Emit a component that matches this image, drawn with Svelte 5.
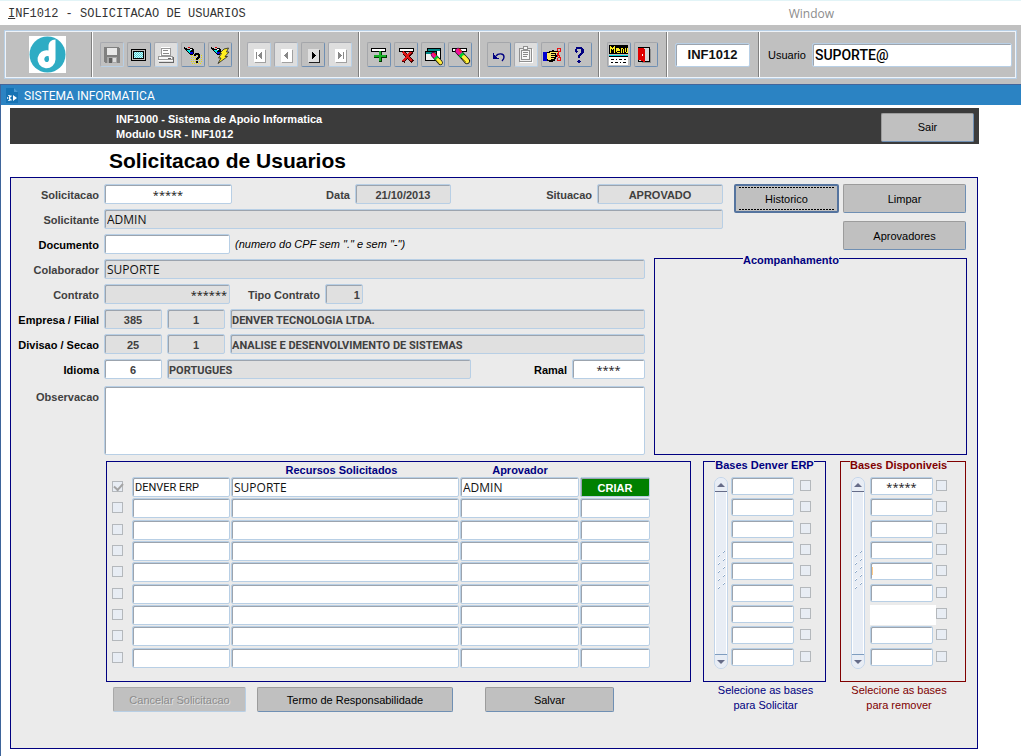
<script>
  const resources = Array.from({ length: 9 }, (_, i) =>
    i === 0
      ? { on: true, name: 'DENVER ERP', requested: 'SUPORTE', approver: 'ADMIN', action: 'CRIAR' }
      : { on: false, name: '', requested: '', approver: '', action: '' }
  );
  const erpBases = Array.from({ length: 9 }, () => '');
  const freeBases = Array.from({ length: 9 }, (_, i) => (i === 0 ? '*****' : ''));

  const toolGroups = [
    [
      { id: 'save', label: 'Gravar', off: true },
      { id: 'screen', label: 'Tela' },
      { id: 'print', label: 'Imprimir', off: true, pale: true },
      { id: 'query', label: 'Consultar' },
      { id: 'execute', label: 'Executar consulta' }
    ],
    [
      { id: 'first', label: 'Primeiro', off: true, pale: true },
      { id: 'prev', label: 'Anterior', off: true, pale: true },
      { id: 'next', label: 'Proximo' },
      { id: 'last', label: 'Ultimo', off: true, pale: true }
    ],
    [
      { id: 'add', label: 'Inserir' },
      { id: 'remove', label: 'Excluir' },
      { id: 'clearform', label: 'Limpar tela' },
      { id: 'clearrow', label: 'Limpar registro' }
    ],
    [
      { id: 'undo', label: 'Desfazer' },
      { id: 'list', label: 'Lista', off: true, pale: true },
      { id: 'point', label: 'Editar' },
      { id: 'help', label: 'Ajuda' }
    ],
    [
      { id: 'menu', label: 'Menu' },
      { id: 'exit', label: 'Sair do modulo' }
    ]
  ];
</script>

{#snippet torch()}
  <path fill="#000" d="M2 3h1v1h2v1h3v-1h3v1h1v5h-1v1h-3v-1h-1v-1h-1v-1h-1v-1h-1v-1h-1v-1h-1z" />
  <path fill="#00e5e5" d="M5 6h4v1h-1v2h-1v-1h-1v-1h-1z" />
  <path fill="#fff" d="M8 5h2v1h-2z" />
  <path fill="#0000e0" d="M8 8h3v2h-3z" />
  <path fill="#e00000" d="M6 3h2v1h-2z" />
{/snippet}

{#snippet brush()}
  <g fill="none" shape-rendering="auto">
    <path stroke="#000" stroke-width="6" stroke-linecap="round" d="M9 7l9 10" />
    <path stroke="#f010a0" stroke-width="5" stroke-linecap="round" d="M9 7l2 2" />
    <path stroke="#ff2020" stroke-width="2" d="M10 5l2 3" />
    <path stroke="#00d030" stroke-width="5" d="M11.500 10l2.500 2.500" />
    <path stroke="#ffee40" stroke-width="4.500" stroke-linecap="round" d="M15 13.500l3 3.500" />
    <path stroke="#a89800" stroke-width="1" d="M13 14l4 4" />
  </g>
{/snippet}

{#snippet glyph(id)}
  <svg viewBox="0 0 22 22" width="22" height="22" aria-hidden="true" shape-rendering="crispEdges">
    {#if id === 'save'}
      <path fill="#808080" d="M3 3h15v1h1v15h-15v-1h-1z" />
      <path fill="#e8e8e8" d="M6 4h10v7h-10z" />
      <path fill="#a8a8a8" d="M6 13h10v6h-10z" />
      <path fill="#606060" d="M8 14h3v5h-3z" />
      <path fill="#dcdcdc" d="M12 14h3v4h-3z" />
    {:else if id === 'screen'}
      <path fill="#c0c0c0" stroke="#000" d="M3.500 5.500h14v11h-14z" />
      <path fill="#c8ffff" stroke="#000" d="M5.500 7.500h10v7h-10z" />
      <path stroke="#58c8d0" stroke-dasharray="1 1" d="M6 8.500h9M6 10.500h9M6 12.500h9" />
      <path stroke="#58c8d0" stroke-dasharray="1 1" d="M7 9.500h8M7 11.500h8M7 13.500h8" />
    {:else if id === 'print'}
      <path fill="#fff" d="M6 3h9v9h-10v-2h1z" />
      <path fill="none" stroke="#999" d="M6.500 4.500h9v7h-9z" />
      <path fill="#888" d="M8 6h5v1h-5zM8 9h6v1h-6z" />
      <path fill="#fafafa" d="M3 12h15v5h-15z" />
      <path fill="none" stroke="#999" d="M3.500 12.500h14v3h-14z" />
      <path fill="#666" d="M13 14h3v1h-3zM4 18h15v1h-15zM18 13h1v5h-1z" />
    {:else if id === 'query'}
      <path stroke="#e8e000" stroke-dasharray="1 1" d="M9 11.500h11M9 13.500h11M9 15.500h11M9 17.500h11M10 19.500h10" />
      {@render torch()}
      <path fill="#000" d="M13 9h4v1h1v4h-1v1h-1v1h-2v-2h1v-1h1v-2h-2v1h-2v-2h1zM14 17h2v2h-2z" />
    {:else if id === 'execute'}
      {@render torch()}
      <path fill="#ffee20" stroke="#222" stroke-width=".8" stroke-linejoin="round" d="M15 5l4.500-1-2 4h2.500l-4 4.500h2.500l-9.500 7 3-5.500h-2.500l3-4.500h-2z" shape-rendering="auto" />
    {:else if id === 'first' || id === 'prev' || id === 'next' || id === 'last'}
      <path fill={id === 'next' ? '#202020' : '#a0a0a0'} d="M7 6h11v13h-11z" />
      <path fill={id === 'next' ? '#e0e0e0' : '#fff'} d="M6 5h11v13h-11z" />
      <g fill={id === 'next' ? '#000' : '#888'}>
        {#if id === 'first'}
          <path d="M8 8h1v7h-1zM14 8v7h-1v-1h-1v-1h-1v-1h-1v-1h1v-1h1v-1h1v-1z" />
        {:else if id === 'prev'}
          <path d="M13 8v7h-1v-1h-1v-1h-1v-1h-1v-1h1v-1h1v-1h1v-1z" />
        {:else if id === 'next'}
          <path d="M10 8h1v1h1v1h1v1h1v1h-1v1h-1v1h-1v1h-1z" />
        {:else}
          <path d="M14 8h1v7h-1zM9 8h1v1h1v1h1v1h1v1h-1v1h-1v1h-1v1h-1z" />
        {/if}
      </g>
    {:else if id === 'add'}
      <path fill="#fff" stroke="#000" d="M3.500 4.500h14v3h-14z" />
      <path fill="#003800" d="M12 8h2v3h5v3h-5v4h-3v-4h-5v-1h6z" />
      <path fill="#18b028" d="M11 7h2v4h5v2h-5v4h-2v-4h-5v-2h5z" />
    {:else if id === 'remove'}
      <path fill="#fff" stroke="#000" d="M4.500 4.500h14v3h-14z" />
      <path fill="none" stroke="#400" stroke-width="3" d="M9 9l9 9M17 8l-9 10" />
      <path fill="none" stroke="#e01818" stroke-width="2" d="M8 8l9 9M16 8l-8 9" />
    {:else if id === 'clearform'}
      <path fill="#fff" stroke="#000" d="M5.500 4.500h13v10h-13z" />
      <path fill="#088" d="M6 5h12v2h-12z" />
      <path fill="#f0f0f0" stroke="#000" d="M3.500 7.500h11v9h-11z" />
      <path fill="#088" d="M4 8h10v2h-10z" />
      <g transform="translate(4 5) scale(.8)">{@render brush()}</g>
    {:else if id === 'clearrow'}
      <path fill="#fff" stroke="#000" d="M3.500 4.500h14v3h-14z" />
      {@render brush()}
    {:else if id === 'undo'}
      <path fill="#000080" d="M5 9h1v5h5v1h-6z M6 11h1v1h1v1h1v1h-3z" />
      <path fill="none" stroke="#000080" stroke-width="1.400" d="M8 12c2-3 8-3 8 1 0 2-1 3-2 4" shape-rendering="auto" />
    {:else if id === 'list'}
      <path fill="#fff" d="M5 5h13v14h-13z" />
      <path fill="#eee" stroke="#909090" d="M4.500 4.500h12v13h-12z" />
      <path fill="#f8f8f8" stroke="#909090" d="M8.500 2.500h4v3h-4zM6.500 6.500h8v9h-8z" />
      <path fill="#888" d="M8 8h5v1h-5zM8 10h5v1h-5zM8 12h4v1h-4z" />
    {:else if id === 'point'}
      <path fill="#0000d0" d="M1 8h4v9h-4z" />
      <path fill="#000" d="M5 8h2v-1h3v-1h2v1h5v2h-3v2h1v2h-1v2h-1v2h-2v1h-4v-1h-2z" />
      <path fill="#ffe860" d="M5 9h3v-1h3v1h-2v1h4v1h-4v1h4v1h-4v1h3v1h-3v1h-3v-1h-1z" />
      <path fill="#ffe860" d="M11 8h5v1h-5z" />
      <g fill="none" stroke="#e81010"><path d="M15.500 6.500v-2h3v3h-3M15.500 13.500h3v3h-3v-3M17 8l-2 5M15 9l3 4" /></g>
    {:else if id === 'help'}
      <path fill="#000080" d="M7 3h6v1h1v1h1v4h-1v1h-1v1h-1v1h-1v2h-2v-3h1v-1h1v-1h1v-4h-4v2h1v1h-1v1h-1v-1h-1v-3h1zM9 16h2v1h1v1h-1v1h-2v-1h-1v-1h1z" />
    {:else if id === 'menu'}
      <path fill="#000" d="M1 1h19v9h-19z" />
      <g fill="#ffee20">
        <path d="M2 2h1v1h1v1h1v-1h1v-1h1v7h-1v-4h-1v1h-1v-1h-1v4h-1z" />
        <path d="M8 4h3v1h1v2h-3v1h3v1h-3v-1h-1z" />
        <path d="M13 4h2v1h1v4h-1v-4h-1v4h-1zM17 4h1v4h1v-4h1v5h-2v-1h-1z" />
      </g>
      <path fill="#00d8e0" d="M1 11h19v1h-19z" />
      <path fill="#000" d="M1 12h19v1h-19z" />
      <path fill="#fff" d="M1 13h19v8h-19z" />
      <path fill="#000" d="M3 15h3v1h-3zM8 15h1v1h-1zM11 15h3v1h-3zM16 15h2v1h-2zM3 18h2v1h-2zM7 18h3v1h-3zM12 18h1v1h-1zM15 18h3v1h-3z" />
    {:else}
      <path fill="#909090" d="M6 5h10v14h-9v-1h-1z" />
      <path fill="#d8d8d8" stroke="#000" d="M3.500 3.500h11v14h-11z" />
      <path fill="#e00000" d="M3 4h6v1h1v13h-2v-1h-2v-1h-3z" />
      <path fill="#fff" d="M7 10h1v2h-1z" />
    {/if}
  </svg>
{/snippet}

{#snippet scroller(name)}
  <div class="scroller">
    <button type="button" class="up" aria-label={`${name}: acima`}>
      <svg viewBox="0 0 8 4" width="8" height="4" aria-hidden="true"><path fill="#666c88" d="M0 4l4-4 4 4z" /></svg>
    </button>
    <div class="track">
      <svg viewBox="0 0 10 44" width="10" height="44" aria-hidden="true">
        {#each [0, 1, 2, 3, 4] as n}
          <path stroke="#fff" stroke-width="1" d={`M2 ${5 + n * 8}l2-2M7 ${1 + n * 8}l2-2`} />
          <path stroke="#8aa6c6" stroke-width="1" d={`M2 ${6 + n * 8}l2-2M7 ${2 + n * 8}l2-2`} />
        {/each}
      </svg>
    </div>
    <button type="button" class="down" aria-label={`${name}: abaixo`}>
      <svg viewBox="0 0 8 4" width="8" height="4" aria-hidden="true"><path fill="#666c88" d="M0 0l4 4 4-4z" /></svg>
    </button>
  </div>
{/snippet}

{#snippet bases(title, rows)}
  <fieldset class="group titled">
    <legend>{title}</legend>
    <div class="base-body">
      {@render scroller(title)}
      <table>
        <tbody>
          {#each rows as value, i}
            <tr>
              <td class="base" class:flush={rows === freeBases && i === 6}><input class="field stars mid" class:caret={rows === freeBases && i === 4} class:blank={rows === freeBases && i === 6} aria-label={`${title} ${i + 1}`} {value} /></td>
              <td class="pick"><input type="checkbox" disabled aria-label={`${title} ${i + 1} marcar`} /></td>
            </tr>
          {/each}
        </tbody>
      </table>
    </div>
  </fieldset>
{/snippet}

<div class="app">
  <nav class="menubar">
    <a href="#form"><u>I</u>NF1012 - SOLICITACAO DE USUARIOS</a>
    <a class="window" href="#window">Window</a>
  </nav>

  <header class="toolbar">
    <div class="tools">
      <div class="section brand">
        <svg viewBox="0 0 37 37" width="37" height="37" role="img" aria-label="Denver">
          <path fill="#fff" d="M0 0h37v37H0z" />
          <circle cx="18.500" cy="18.500" r="18" fill="#2eacc4" />
          <path fill="#fff" d="M26.500 3.500c-4.500 0-7 3-7 7v4a9 9 0 1 0 7 9z" />
          <path fill="#2eacc4" d="M19.500 20c-3-.3-4.400 1.500-4.200 3.500.3 2 2 3 3.400 2.400 1.300-.6 1.300-1.900 1.300-3.400z" />
        </svg>
      </div>
      {#each toolGroups as group}
        <div class="section" class:roomy={group.length === 2}>
          {#each group as tool}
            <button type="button" class="tool" class:pale={tool.pale} class:off={tool.off} disabled={tool.off} aria-label={tool.label}>
              {@render glyph(tool.id)}
            </button>
          {/each}
        </div>
      {/each}
      <div class="section roomy">
        <input class="field code" aria-label="Modulo" value="INF1012" />
      </div>
      <div class="section user">
        <label for="usuario">Usuario</label>
        <input class="field login" id="usuario" value="SUPORTE@" />
      </div>
    </div>
  </header>

  <main class="frame">
    <div class="titlebar">
      <svg viewBox="0 0 12 15" width="12" height="15" aria-hidden="true">
        <path fill="#1673b4" d="M0 0h8l4 4v11H0z" />
        <path fill="#4b9ad2" d="M8 0l4 4H8z" />
        <path fill="none" stroke="#fff" d="M1 10h1M3 7v1M3 12v1M5.500 8a2 2 0 1 0 0 4" stroke-width="1.500" />
        <path fill="#fff" d="M7 7l4 3-4 3z" />
      </svg>
      <span>SISTEMA INFORMATICA</span>
    </div>

    <div class="page">
      <div class="banner">
        <div>
          <div>INF1000 - Sistema de Apoio Informatica</div>
          <div>Modulo USR - INF1012</div>
        </div>
        <button type="button" class="btn leave">Sair</button>
      </div>
      <h1>Solicitacao de Usuarios</h1>

      <form class="panel" id="form" onsubmit={(e) => e.preventDefault()}>
        <div class="upper">
          <div class="ids">
            <div class="row">
              <label class="lead" for="solicitacao">Solicitacao</label>
              <input class="field stars mid w-sol" id="solicitacao" value="*****" />
              <label class="grow-data" for="data">Data</label>
              <input class="field bold mid w-data" id="data" readonly value="21/10/2013" />
              <label class="grow-sit" for="situacao">Situacao</label>
              <input class="field bold mid w-sit" id="situacao" readonly value="APROVADO" />
            </div>
            <div class="row">
              <label class="lead" for="solicitante">Solicitante</label>
              <input class="field fill" id="solicitante" readonly value="ADMIN" />
            </div>
          </div>

          <div class="row doc">
            <label class="lead strong" for="documento">Documento</label>
            <input class="field w-doc" id="documento" value="" />
            <em>(numero do CPF sem "." e sem "-")</em>
          </div>

          <div class="actions">
            <button type="button" class="btn focus">Historico</button>
            <button type="button" class="btn">Limpar</button>
            <button type="button" class="btn second">Aprovadores</button>
          </div>

          <div class="details">
            <div class="row">
              <label class="lead" for="colaborador">Colaborador</label>
              <input class="field fill" id="colaborador" readonly value="SUPORTE" />
            </div>
            <div class="row">
              <label class="lead" for="contrato">Contrato</label>
              <input class="field stars end w-doc" id="contrato" readonly value="******" />
              <label class="tipo" for="tipo">Tipo Contrato</label>
              <input class="field bold end w-tipo" id="tipo" readonly value="1" />
            </div>
            <div class="row">
              <label class="lead strong" for="empresa">Empresa / Filial</label>
              <input class="field bold mid w-num" id="empresa" readonly value="385" />
              <input class="field bold mid w-num" aria-label="Filial" readonly value="1" />
              <input class="field bold name fill" aria-label="Nome da empresa" readonly value="DENVER TECNOLOGIA LTDA." />
            </div>
            <div class="row">
              <label class="lead strong" for="divisao">Divisao / Secao</label>
              <input class="field bold mid w-num" id="divisao" readonly value="25" />
              <input class="field bold mid w-num" aria-label="Secao" readonly value="1" />
              <input class="field bold name fill" aria-label="Nome da secao" readonly value="ANALISE E DESENVOLVIMENTO DE SISTEMAS" />
            </div>
            <div class="row">
              <label class="lead strong" for="idioma">Idioma</label>
              <input class="field bold mid w-num" id="idioma" value="6" />
              <input class="field bold name lang" aria-label="Nome do idioma" readonly value="PORTUGUES" />
              <label class="strong grow-ramal" for="ramal">Ramal</label>
              <input class="field stars mid w-ramal" id="ramal" value="****" />
            </div>
            <div class="row notes">
              <label class="lead" for="observacao">Observacao</label>
              <textarea class="field fill" id="observacao"></textarea>
            </div>
          </div>

          <fieldset class="group follow">
            <legend>Acompanhamento</legend>
          </fieldset>
        </div>

        <div class="lower">
          <div class="main-col">
            <div class="group resources">
              <table>
                <thead>
                  <tr>
                    <th class="pick" aria-label="Marcar"></th>
                    <th class="name" aria-label="Recurso"></th>
                    <th class="shifted">Recursos Solicitados</th>
                    <th class="approver">Aprovador</th>
                    <th class="action" aria-label="Acao"></th>
                  </tr>
                </thead>
                <tbody>
                  {#each resources as r, i}
                    <tr>
                      <td class="pick"><input type="checkbox" disabled checked={r.on} aria-label={`Linha ${i + 1}`} /></td>
                      <td><input class="field system" aria-label={`Recurso ${i + 1}`} value={r.name} /></td>
                      <td><input class="field" aria-label={`Solicitado ${i + 1}`} value={r.requested} /></td>
                      <td><input class="field" aria-label={`Aprovador ${i + 1}`} value={r.approver} /></td>
                      <td><input class="field bold mid" class:create={r.action} aria-label={`Acao ${i + 1}`} value={r.action} /></td>
                    </tr>
                  {/each}
                </tbody>
              </table>
            </div>
            <div class="footer">
              <button type="button" class="btn cancel" disabled>Cancelar Solicitacao</button>
              <button type="button" class="btn terms">Termo de Responsabilidade</button>
              <button type="button" class="btn store">Salvar</button>
            </div>
          </div>

          <div class="base-col erp">
            {@render bases('Bases Denver ERP', erpBases)}
            <p>Selecione as bases<br />para Solicitar</p>
          </div>
          <div class="base-col free">
            {@render bases('Bases Disponiveis', freeBases)}
            <p>Selecione as bases<br />para remover</p>
          </div>
        </div>
      </form>
    </div>
  </main>
</div>

<style>
  :global(body) {
    background: #fff;
  }

  .app,
  .app * {
    box-sizing: border-box;
  }

  .app {
    display: flex;
    flex-direction: column;
    min-height: 100vh;
    min-width: 960px;
    font: 11px/14px 'Liberation Sans', Arial, sans-serif;
    color: #000;
  }

  .menubar {
    display: flex;
    align-items: center;
    justify-content: space-between;
    height: 25px;
    padding: 1px 187px 0 8px;
    border-top: 1px solid #e2f4f7;
  }

  .menubar a {
    color: #333;
    text-decoration: none;
    font: 12px/16px 'Liberation Mono', 'Courier New', monospace;
  }

  .menubar .window {
    color: #8c8c8c;
    font-family: 'Open Sans', sans-serif;
  }

  .toolbar {
    height: 59px;
    padding: 5px 4px;
    background: #c0c0c0;
  }

  .tools {
    display: flex;
    height: 49px;
    border: 1px solid #b8cfe5;
    box-shadow: inset 0 0 0 1px #eef3f9;
  }

  .section {
    display: flex;
    flex: none;
    align-items: center;
    gap: 3px;
    margin: 1px 0;
    padding: 0 7px;
    border-right: 1px solid #fff;
    box-shadow: inset -1px 0 #808080;
  }

  .section.roomy {
    padding-right: 9px;
  }

  .section.brand {
    width: 88px;
    padding: 0 0 0 24px;
  }

  .section.user {
    flex: 1;
    gap: 6px;
    padding: 0 4px 0 8px;
    border: 0;
    box-shadow: none;
  }

  .tool {
    width: 24px;
    height: 25px;
    padding: 0;
    border: 1px solid;
    border-color: #a4a6aa #6f8fb3 #6f8fb3 #a4a6aa;
    border-radius: 2px;
    background: #c0c0c0;
  }

  .tool.off {
    border-color: #a8aab0 #b8cfe5 #b8cfe5 #a8aab0;
  }

  .tool.pale {
    background: #dedede;
  }

  .tool svg {
    display: block;
  }

  .field {
    display: block;
    width: 100%;
    height: 20px;
    margin: 0;
    padding: 0 2px;
    border: 1px solid #b8cfe5;
    border-radius: 2px;
    outline: 0;
    box-shadow: inset 1px 1px #9ca4ae;
    background: #fff;
    color: #111;
    font: 12px/18px 'Open Sans', sans-serif;
  }

  .field:read-only {
    background: #e0e0e0;
  }

  .field.bold {
    padding-top: 2px;
    color: #404040;
    font: bold 11px/16px 'Liberation Sans', Arial, sans-serif;
  }

  .field.name {
    padding-left: 1px;
    font-family: Roboto, sans-serif;
  }

  .field.stars {
    padding-top: 1px;
    font-size: 11px;
    line-height: 16px;
  }

  .field.system {
    font: 11px/18px Roboto, sans-serif;
  }

  .field.mid {
    text-align: center;
  }

  .field.end {
    text-align: right;
  }

  .field.code {
    width: 75px;
    height: 24px;
    font: bold 13px/22px 'Liberation Sans', Arial, sans-serif;
    text-align: center;
  }

  .field.login {
    flex: 1;
    min-width: 0;
    height: 24px;
    color: #000;
    font: 500 14px/22px Roboto, sans-serif;
  }

  .frame {
    flex: 1;
    border-left: 1px solid #3f659b;
  }

  .titlebar {
    display: flex;
    align-items: center;
    gap: 6px;
    height: 21px;
    padding: 1px 5px 0;
    border-top: 1px solid #44659a;
    background: #2b83c3;
    color: #fff;
    font: 12px/18px Roboto, sans-serif;
  }

  .page {
    padding: 3px 43px 7px 9px;
  }

  .banner {
    display: flex;
    align-items: center;
    justify-content: space-between;
    height: 36px;
    margin-right: -1px;
    padding: 2px 5px 0 106px;
    background: #3b3b3b;
    color: #fff;
    font-weight: bold;
    line-height: 15px;
  }

  h1 {
    margin: 0;
    padding: 5px 0 4px 99px;
    font-size: 21px;
    line-height: 24px;
  }

  .btn {
    height: 29px;
    padding: 0;
    border: 1px solid;
    border-color: #9c9c9c #6f8fb3 #6f8fb3 #9c9c9c;
    border-radius: 2px;
    background: #c0c0c0;
    color: #000;
    font: 11px/14px 'Liberation Sans', Arial, sans-serif;
  }

  .btn:disabled {
    border-color: #a8a8a8 #b8cfe5 #b8cfe5 #a8a8a8;
    color: #8c8c8c;
    text-shadow: 1px 1px #e0e0e0;
  }

  .btn.leave {
    width: 93px;
  }

  .panel {
    border: 1px solid #000080;
    background: #ebebeb;
  }

  .upper {
    display: grid;
    grid-template-columns: minmax(0, 1fr) 69px 244px;
    padding: 6px 10px 0 0;
  }

  .ids {
    grid-area: 1 / 1 / 2 / 3;
    display: grid;
    gap: 5px;
    padding-bottom: 5px;
  }

  .doc {
    grid-area: 2 / 1 / 3 / 3;
    padding-bottom: 5px;
  }

  .doc em {
    color: #000;
  }

  .actions {
    grid-area: 1 / 3 / 3 / 4;
    display: grid;
    grid-template-columns: 105px 123px;
    gap: 8px 4px;
    align-content: start;
    justify-content: end;
    padding-right: 1px;
  }

  .actions .second {
    grid-column: 2;
  }

  .btn.focus {
    border: 2px solid #55749f;
    background:
      repeating-linear-gradient(90deg, #000 0 2px, transparent 2px 3px) 3px 1px / 95px 1px no-repeat,
      repeating-linear-gradient(90deg, #000 0 2px, transparent 2px 3px) 3px 23px / 95px 1px no-repeat,
      #c0c0c0;
  }

  .details {
    grid-area: 3 / 1 / 4 / 2;
    display: grid;
    gap: 5px;
    align-content: start;
    padding-right: 9px;
  }

  .follow {
    grid-area: 3 / 2 / 4 / 4;
  }

  .row {
    display: flex;
    align-items: center;
    gap: 5px;
  }

  .row label {
    flex: none;
    padding-top: 2px;
    color: #404040;
    font-weight: bold;
    text-align: right;
    white-space: nowrap;
  }

  .row label.lead {
    width: 88px;
  }

  .row label.strong {
    color: #000;
  }

  .row label.grow-data {
    flex: 117 1 0;
  }

  .row label.grow-sit {
    flex: 141 1 0;
  }

  .row label.grow-ramal {
    flex: 93 1 0;
  }

  .row label.tipo {
    padding-left: 13px;
  }

  .row .fill {
    flex: 1;
    min-width: 0;
  }

  .row .lang {
    flex: 306 1 0;
    min-width: 0;
  }

  .w-sol {
    width: 128px;
  }

  .w-data {
    width: 96px;
  }

  .w-sit {
    width: 126px;
  }

  .w-doc {
    width: 126px;
  }

  .w-tipo {
    width: 38px;
  }

  .w-num {
    width: 58px;
  }

  .w-ramal {
    width: 73px;
  }

  .notes {
    align-items: flex-start;
    padding-top: 2px;
  }

  .notes label {
    padding-top: 4px;
  }

  textarea.field {
    height: 69px;
    resize: none;
  }

  .group {
    min-width: 0;
    margin: 0;
    padding: 0;
    border: 1px solid #000080;
    color: #000080;
  }

  legend {
    margin: 0 auto;
    padding: 3px 0 0;
    color: inherit;
    font-weight: bold;
  }

  fieldset.follow {
    margin-top: -9px;
  }

  .follow legend {
    margin-left: 88px;
  }

  .lower {
    display: flex;
    padding: 6px 11px 35px 95px;
  }

  .main-col {
    flex: 1;
    min-width: 0;
  }

  .resources {
    padding: 0 39px 12px 5px;
  }

  table {
    width: 100%;
    border-collapse: collapse;
    table-layout: fixed;
  }

  th {
    height: 15px;
    padding: 2px 0 0;
    font-weight: bold;
    line-height: 13px;
  }

  th.pick {
    width: 20px;
  }

  th.name {
    width: 99px;
  }

  th.shifted {
    padding-right: 8px;
  }

  th.approver {
    width: 120px;
  }

  th.action {
    width: 71px;
  }

  td {
    height: 21px;
    padding: 0 1px 0 0;
    vertical-align: top;
  }

  tbody tr:nth-child(3n + 2) td {
    height: 22px;
  }

  td.pick {
    padding-top: 4px;
  }

  input[type='checkbox'] {
    display: block;
    width: 11px;
    height: 11px;
    margin: 0;
    appearance: none;
    border: 1px solid #b4b8bc;
    background: #e8edf4;
  }

  input[type='checkbox']:checked::after {
    content: '';
    display: block;
    width: 7px;
    height: 4px;
    margin: 1px;
    border: solid #a4a4a4;
    border-width: 0 0 2px 2px;
    transform: rotate(-48deg);
  }

  .field.create {
    background: #008000;
    color: #fff;
  }

  .footer {
    display: flex;
    padding: 5px 0 0 7px;
  }

  .footer .btn {
    height: 25px;
  }

  .btn.cancel {
    width: 133px;
  }

  .btn.terms {
    width: 196px;
    margin-left: 11px;
  }

  .btn.store {
    width: 129px;
    margin-left: 32px;
  }

  .base-col {
    flex: none;
    width: 123px;
    margin-left: 12px;
    color: #000080;
  }

  .base-col.free {
    width: 126px;
    margin-left: 14px;
    color: #800000;
  }

  .free .group {
    border-color: #800000;
    color: #800000;
  }

  .titled {
    margin-top: -11px;
  }

  .titled legend {
    padding-top: 8px;
  }

  .free legend {
    margin-left: 9px;
  }

  .base-col p {
    margin: 0;
    padding: 1px 0 0 2px;
    line-height: 15px;
    text-align: center;
  }

  .free p {
    padding: 1px 8px 0 0;
  }

  .base-body {
    display: flex;
    gap: 3px;
    padding: 5px 0 12px 10px;
  }

  .free .base-body {
    gap: 5px;
  }

  .base-body table {
    width: 81px;
  }

  .base {
    width: 69px;
    padding-right: 6px;
  }

  .free .base {
    width: 66px;
    padding-right: 3px;
  }

  .free .flush {
    padding-right: 0;
  }

  .base-body td.pick {
    padding-top: 3px;
  }

  .base .field {
    height: 18px;
    line-height: 14px;
  }

  .field.caret {
    background: linear-gradient(#fc8, #fc8) 1px 4px / 1px 8px no-repeat #fff;
  }

  .base .field.blank {
    height: 20px;
    border-color: #fff;
    border-radius: 0;
    box-shadow: none;
  }

  .scroller {
    display: flex;
    flex-direction: column;
    flex: none;
    width: 14px;
    height: 192px;
    border: 1px solid #c3d5ea;
    border-radius: 7px;
    overflow: hidden;
    background: #e8edf5;
  }

  .scroller button {
    display: grid;
    flex: none;
    place-items: center;
    width: 100%;
    height: 14px;
    padding: 0;
    border: 0;
    background: #e8edf5;
  }

  .scroller .up {
    border-bottom: 1px solid #666c88;
  }

  .scroller .down {
    border-top: 1px solid #7f9dbf;
  }

  .track {
    display: grid;
    flex: 1;
    place-items: center;
    border: solid #fff;
    border-width: 0 1px;
  }
</style>
